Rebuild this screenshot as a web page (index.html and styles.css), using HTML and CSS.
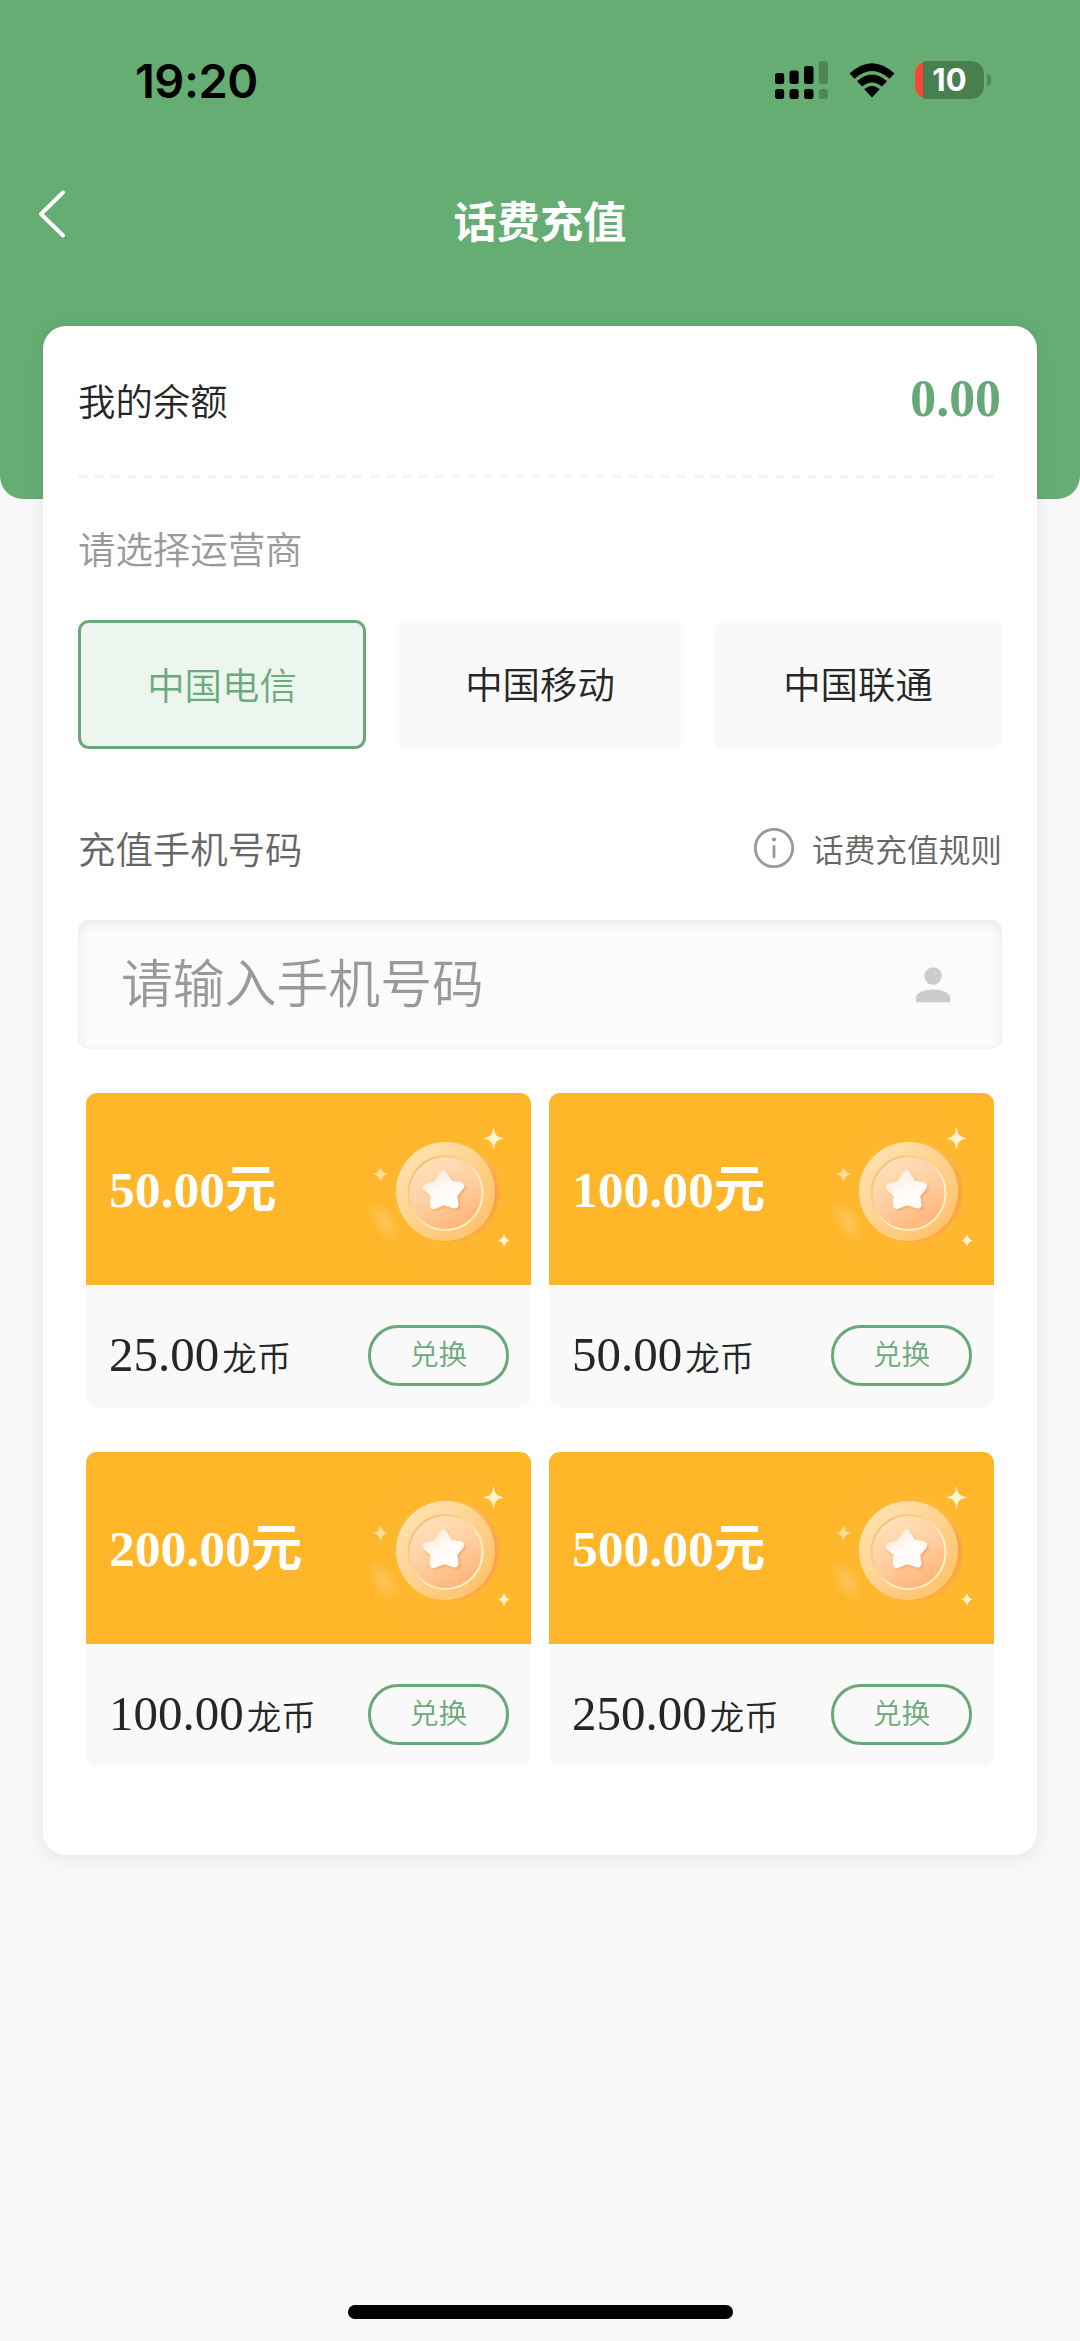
FILE: index.html
```html
<!DOCTYPE html>
<html lang="zh-CN">
<head>
<meta charset="utf-8">
<title>话费充值</title>
<link rel="stylesheet" href="styles.css">
</head>
<body>
<svg class="defs" width="0" height="0" aria-hidden="true">
  <defs>
    <linearGradient id="rim" x1="0" y1="0" x2="1" y2="1"><stop offset="0" stop-color="#ffe6ba"/><stop offset=".5" stop-color="#ffd28c"/><stop offset="1" stop-color="#ffbd62"/></linearGradient>
    <linearGradient id="edge" x1="0" y1="0" x2="1" y2="1"><stop offset=".3" stop-color="#ffc45e"/><stop offset=".75" stop-color="#ff9f40"/><stop offset="1" stop-color="#ffb547"/></linearGradient>
    <linearGradient id="face" x1=".2" y1="0" x2=".7" y2="1"><stop offset="0" stop-color="#ffe2bd"/><stop offset=".5" stop-color="#ffd0a2"/><stop offset="1" stop-color="#ffb377"/></linearGradient>
    <linearGradient id="star" x1="0" y1="0" x2=".6" y2="1"><stop offset="0" stop-color="#ffeadb"/><stop offset=".6" stop-color="#fffaf7"/><stop offset="1" stop-color="#fff"/></linearGradient>
    <linearGradient id="lip" x1="0" y1="0" x2="1" y2="1"><stop offset="0" stop-color="#f6b565"/><stop offset=".45" stop-color="#ffd59c"/><stop offset=".6" stop-color="#fff0c8"/><stop offset="1" stop-color="#fff0c8"/></linearGradient>
    <radialGradient id="glow"><stop offset="0" stop-color="#ffd07a" stop-opacity=".6"/><stop offset="1" stop-color="#ffd07a" stop-opacity="0"/></radialGradient>
    <radialGradient id="halo"><stop offset=".4" stop-color="#ffbb3c" stop-opacity=".5"/><stop offset="1" stop-color="#ffbb3c" stop-opacity="0"/></radialGradient>
    <filter id="soft" x="-20%" y="-20%" width="140%" height="140%"><feGaussianBlur stdDeviation="1.3"/></filter>
    <symbol id="coin" viewBox="0 0 190 190">
      <circle cx="100" cy="95" r="85" fill="url(#halo)"/>
      <ellipse cx="34" cy="122" rx="13" ry="24" transform="rotate(-32 34 122)" fill="url(#glow)"/>
      <circle cx="100.500" cy="92" r="49" fill="url(#edge)" filter="url(#soft)"/>
      <circle cx="95.500" cy="91.500" r="49.500" fill="url(#rim)"/>
      <circle cx="95.500" cy="93" r="37" fill="url(#face)" stroke="url(#lip)" stroke-width="2"/>
      <path d="M95 76 L101 86 L112 88.500 L105 97 L107 107 L95.500 103.500 L85 107 L86 97 L78 90 L89 86.500 Z" fill="#f9a867" stroke="#f9a867" stroke-width="7" stroke-linejoin="round" filter="url(#soft)"/>
      <path d="M93.500 74.500 L99.500 84.500 L110 86.500 L103 95 L104.500 104.500 L94 101 L84 105 L84.500 94.500 L77 87.500 L87.500 84.500 Z" fill="url(#star)" stroke="url(#star)" stroke-width="8" stroke-linejoin="round"/>
      <path d="M143.500 28 Q144 37.500 153 38.500 Q144 39.500 143.500 49 Q143 39.500 134 38.500 Q143 37.500 143.500 28Z" fill="#fff4d2" stroke="#ffefc0" stroke-width=".8"/>
      <path d="M30.500 66.500 Q32 73 38 74 Q32 75 30.500 82 Q29 75 23 74 Q29 73 30.500 66.500Z" fill="#ffdd96"/>
      <path d="M154 133.500 Q155 139.500 160 140.500 Q155 141.500 154 147.500 Q153 141.500 148 140.500 Q153 139.500 154 133.500Z" fill="#fff3cf"/>
    </symbol>
  </defs>
</svg>
<div class="page">
  <header class="top">
    <div class="status">
      <span class="clock">19:20</span>
      <span class="indicators">
        <svg class="signal" viewBox="0 0 37 38" width="37" height="38">
          <rect x="0" y="12" width="9.200" height="11" rx="2.500"/><rect x="14.500" y="9.500" width="9.200" height="13.500" rx="2.500"/><rect x="29" y="5" width="9.500" height="18" rx="2.500"/>
          <rect x="0" y="28" width="9.200" height="10" rx="2.800"/><rect x="14.500" y="28" width="9.200" height="10" rx="2.800"/><rect x="29" y="28" width="9.500" height="10" rx="2.800"/>
          <g opacity=".22"><rect x="43.800" y="0" width="9.200" height="23" rx="2.800"/><rect x="43.800" y="28" width="9.200" height="10" rx="2.800"/></g>
        </svg>
        <svg class="wifi" viewBox="0 0 46 35" width="46" height="35">
          <path d="M0.500 10.500 Q23 -10 45.500 10.500 L40.500 15.800 Q23 0.300 5.500 15.800Z"/>
          <path d="M8 18.200 Q23 5 38 18.200 L32.800 23.500 Q23 15.500 13.200 23.500Z"/>
          <path d="M15.800 26.300 Q23 20.500 30.200 26.300 L23 34Z" stroke="#000" stroke-width="1" stroke-linejoin="round"/>
        </svg>
        <span class="battery"><span class="battery-level">10</span><i class="battery-tip"></i></span>
      </span>
    </div>
    <nav class="navbar">
      <svg class="back" viewBox="0 0 30 50" width="30" height="50"><path d="M26 3.500 L4 25 L26 46.500"/></svg>
      <h1 class="title">话费充值</h1>
    </nav>
  </header>

  <main class="card">
    <section class="balance"><span>我的余额</span><strong class="amount">0.00</strong></section>
    <p class="hint">请选择运营商</p>
    <div class="carriers">
      <button class="carrier active">中国电信</button>
      <button class="carrier">中国移动</button>
      <button class="carrier">中国联通</button>
    </div>
    <div class="phone-head">
      <span>充值手机号码</span>
      <a class="rules">
        <svg viewBox="0 0 42 42" width="42" height="42"><circle cx="21" cy="21" r="18.700"/><path d="M21 19.500 V30"/><circle class="dot" cx="21" cy="12.500" r="2.100"/></svg>
        话费充值规则
      </a>
    </div>
    <div class="phone-field">
      <span>请输入手机号码</span>
      <svg viewBox="0 0 36 36" width="36" height="36"><circle cx="18" cy="9" r="8.700"/><path d="M.8 35.300 V31 C.8 25.500 9.500 22.500 18 22.500 S35.200 25.500 35.200 31 V35.300Z"/></svg>
    </div>
    <div class="products">
      <article class="product">
        <div class="face"><b>50.00元</b><svg class="coin"><use href="#coin"/></svg></div>
        <div class="price"><span class="cost">25.00<small>龙币</small></span><button class="redeem">兑换</button></div>
      </article>
      <article class="product">
        <div class="face"><b>100.00元</b><svg class="coin"><use href="#coin"/></svg></div>
        <div class="price"><span class="cost">50.00<small>龙币</small></span><button class="redeem">兑换</button></div>
      </article>
      <article class="product">
        <div class="face"><b>200.00元</b><svg class="coin"><use href="#coin"/></svg></div>
        <div class="price"><span class="cost">100.00<small>龙币</small></span><button class="redeem">兑换</button></div>
      </article>
      <article class="product">
        <div class="face"><b>500.00元</b><svg class="coin"><use href="#coin"/></svg></div>
        <div class="price"><span class="cost">250.00<small>龙币</small></span><button class="redeem">兑换</button></div>
      </article>
    </div>
  </main>
  <div class="home-bar"></div>
</div>
</body>
</html>
```
FILE: styles.css
```css
* { box-sizing: border-box; margin: 0; padding: 0; }
body { background: #f8f8f8; font-family: "Noto Sans CJK SC", sans-serif; font-weight: 350; color: #262626; }
button { font: inherit; color: inherit; border: 0; background: none; }
svg { display: block; flex: none; }
.defs { position: absolute; }
.page { width: 1080px; height: 2341px; display: flex; flex-direction: column; overflow: hidden; }

.top { height: 499px; flex: none; background: #66ad73; border-radius: 0 0 23px 23px; }
.status { height: 160px; display: flex; justify-content: space-between; padding: 0 96px 0 135px; }
.clock { font: 600 47px/162px Inter, sans-serif; color: #000; letter-spacing: -0.5px; }
.indicators { display: flex; align-items: center; }
.signal { overflow: visible; margin-right: 37px; }
.wifi { margin-right: 20px; }
.battery { position: relative; width: 69px; height: 38px; border-radius: 13px; background: linear-gradient(90deg, #ff4438 8px, #487f51 8px); }
.battery-level { display: block; font: 700 31px/38px Inter, sans-serif; color: #fff; text-align: center; }
.battery-tip { position: absolute; left: 72px; top: 13px; width: 3.5px; height: 12px; border-radius: 0 6px 6px 0; background: #508b5b; }
.navbar { height: 120px; display: grid; grid-template-columns: 100px 1fr 100px; align-items: center; }
.back { margin: -12px 0 0 37px; fill: none; stroke: #fff; stroke-width: 4; stroke-linecap: round; stroke-linejoin: round; }
.title { color: #fff; font-size: 43.2px; font-weight: 600; line-height: 60px; text-align: center; margin-top: -3px; }

.card { flex: none; width: 994px; height: 1529px; margin: -173px auto 0; padding: 0 35px; background: #fff; border-radius: 23px; box-shadow: 0 3px 22px rgba(0, 0, 0, .08); font-size: 37.44px; }
.balance { height: 152px; display: flex; justify-content: space-between; align-items: center; background: repeating-linear-gradient(90deg, #f5f5f5 0 9px, transparent 9px 16.200px) left bottom / 100% 3px no-repeat; }
.balance span { line-height: 50px; margin-top: -5px; }
.amount { font: 700 51.84px/60px "Liberation Serif", serif; color: #66a877; margin: -6px 1px 0 0; }
.hint { height: 142px; line-height: 140px; color: #999; }
.carriers { display: grid; grid-template-columns: repeat(3, 288px); justify-content: space-between; height: 129px; }
.carrier { border-radius: 11px; background: #f9f9f9; line-height: 125px; padding-bottom: 2px; }
.carrier.active { background: #ecf5ee; border: 3px solid #69a879; color: #6baa7b; line-height: 120px; padding-bottom: 1px; }
.phone-head { height: 171px; display: flex; align-items: center; justify-content: space-between; color: #666; }
.phone-head > span { margin-top: 27px; }
.rules { display: flex; align-items: center; gap: 17px; font-size: 31.680px; margin-top: 27px; }
.rules svg { fill: none; stroke: #999; stroke-width: 2.800; stroke-linecap: round; }
.rules .dot { fill: #999; stroke: none; }
.phone-field { height: 129px; display: flex; align-items: center; justify-content: space-between; padding: 0 51px 0 43px; border-radius: 11px; background: #fbfbfb; box-shadow: inset 0 3px 12px rgba(0, 0, 0, .08); font-size: 51.84px; color: #999; }
.phone-field span { line-height: 60px; margin-top: -8px; }
.phone-field svg { fill: #ccc; }
.products { display: grid; grid-template-columns: 445px 445px; column-gap: 18px; row-gap: 44px; padding: 44px 8px 0; }
.product { border-radius: 11px; overflow: hidden; background: #f9f9f9; height: 315px; }
.face { height: 192px; display: flex; align-items: center; justify-content: space-between; padding-left: 23px; background: #ffb629; color: #fff; }
.face b { font: 600 51.5px/60px "Liberation Serif", "Noto Sans CJK SC", serif; white-space: nowrap; margin-top: 2px; }
.coin { width: 190px; height: 190px; margin: 12px -9px 0 0; }
.price { height: 123px; display: flex; align-items: center; justify-content: space-between; padding: 0 22px 0 23px; }
.cost { font: 400 48.960px/60px "Liberation Serif", serif; margin-top: 16px; }
.cost small { font: 350 34.560px/50px "Noto Sans CJK SC", sans-serif; margin-left: 3px; }
.redeem { width: 141px; height: 61px; margin-top: 18px; border: 3px solid #69a879; border-radius: 30px; color: #6aaa7b; font-size: 28.800px; line-height: 48px; padding-bottom: 6px; }
.home-bar { flex: none; width: 385px; height: 14px; margin: 450px auto 0; border-radius: 7px; background: #000; }
```
